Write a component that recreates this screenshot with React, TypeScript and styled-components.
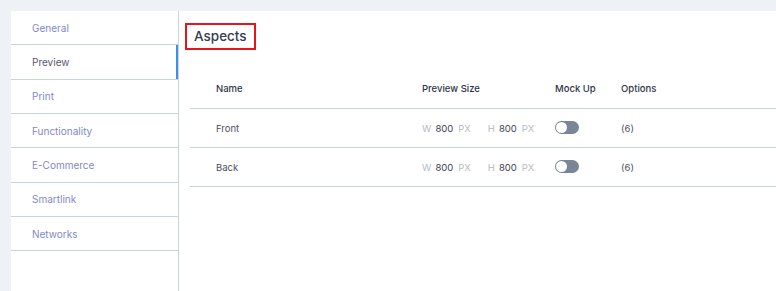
import React from 'react';
import styled, { createGlobalStyle } from 'styled-components';

const GlobalStyle = createGlobalStyle`
  html, body {
    margin: 0;
    padding: 0;
    background: #eef1f5;
    font-family: Inter, "Open Sans", sans-serif;
  }
`;

const Page = styled.div`
  display: flex;
  padding: 11px 0 0 11px;
  height: 291px;
  box-sizing: border-box;
`;

const Sidebar = styled.nav`
  width: 167px;
  background: #fff;
  border-right: 1px solid #c9d3e1;
  display: flex;
  flex-direction: column;
`;

const NavItem = styled.div<{ active?: boolean }>`
  height: 33.35px;
  flex-shrink: 0;
  display: flex;
  align-items: center;
  padding-left: 21px;
  font-size: 10px;
  color: ${({ active }) => (active ? '#5b5670' : '#7f89c9')};
  border-bottom: 1px solid #c9d3e1;
  box-shadow: ${({ active }) => (active ? 'inset -2px 0 0 #3d8fe8' : 'none')};
`;

const Main = styled.main`
  flex: 1;
  background: #fff;
  padding: 12px 0 0 6px;
`;

const Heading = styled.h2`
  display: inline-block;
  margin: 0;
  padding: 3px 7px 3px 7px;
  border: 2px solid #e8141c;
  font-size: 13.5px;
  font-weight: 500;
  color: #353b52;
  line-height: 17px;
`;

const Table = styled.div`
  margin: 18px 0 0 5px;
`;

const Row = styled.div<{ header?: boolean }>`
  display: grid;
  grid-template-columns: 206px 133px 66px 1fr;
  align-items: center;
  height: ${({ header }) => (header ? '40px' : '38px')};
  padding-left: 26px;
  border-bottom: 1px solid #c9d3e1;
  font-size: 9.5px;
  font-weight: ${({ header }) => (header ? 500 : 400)};
  color: ${({ header }) => (header ? '#2f3547' : '#4c5060')};
`;

const Size = styled.div`
  display: flex;
  align-items: center;
`;

const Unit = styled.span<{ gap?: number }>`
  color: #b6bac4;
  margin-right: ${({ gap }) => gap ?? 4}px;
`;

const Value = styled.span`
  color: #3d4252;
  margin-right: 5px;
`;

const Toggle = styled.span`
  display: inline-block;
  position: relative;
  width: 24px;
  height: 13px;
  border-radius: 7px;
  background: #7a8598;

  &::after {
    content: '';
    position: absolute;
    left: 1px;
    top: 1px;
    width: 11px;
    height: 11px;
    border-radius: 50%;
    background: #fff;
  }
`;

const navItems = ['General', 'Preview', 'Print', 'Functionality', 'E-Commerce', 'Smartlink', 'Networks'];

const aspects = [
  { name: 'Front', w: 800, h: 800, options: 6 },
  { name: 'Back', w: 800, h: 800, options: 6 },
];

export default function App() {
  return (
    <>
      <GlobalStyle />
      <Page>
        <Sidebar>
          {navItems.map((item) => (
            <NavItem key={item} active={item === 'Preview'}>
              {item}
            </NavItem>
          ))}
        </Sidebar>
        <Main>
          <Heading>Aspects</Heading>
          <Table>
            <Row header>
              <span>Name</span>
              <span>Preview Size</span>
              <span>Mock Up</span>
              <span>Options</span>
            </Row>
            {aspects.map((a) => (
              <Row key={a.name}>
                <span>{a.name}</span>
                <Size>
                  <Unit>W</Unit>
                  <Value>{a.w}</Value>
                  <Unit gap={17}>PX</Unit>
                  <Unit>H</Unit>
                  <Value>{a.h}</Value>
                  <Unit>PX</Unit>
                </Size>
                <span>
                  <Toggle />
                </span>
                <span>({a.options})</span>
              </Row>
            ))}
          </Table>
        </Main>
      </Page>
    </>
  );
}
